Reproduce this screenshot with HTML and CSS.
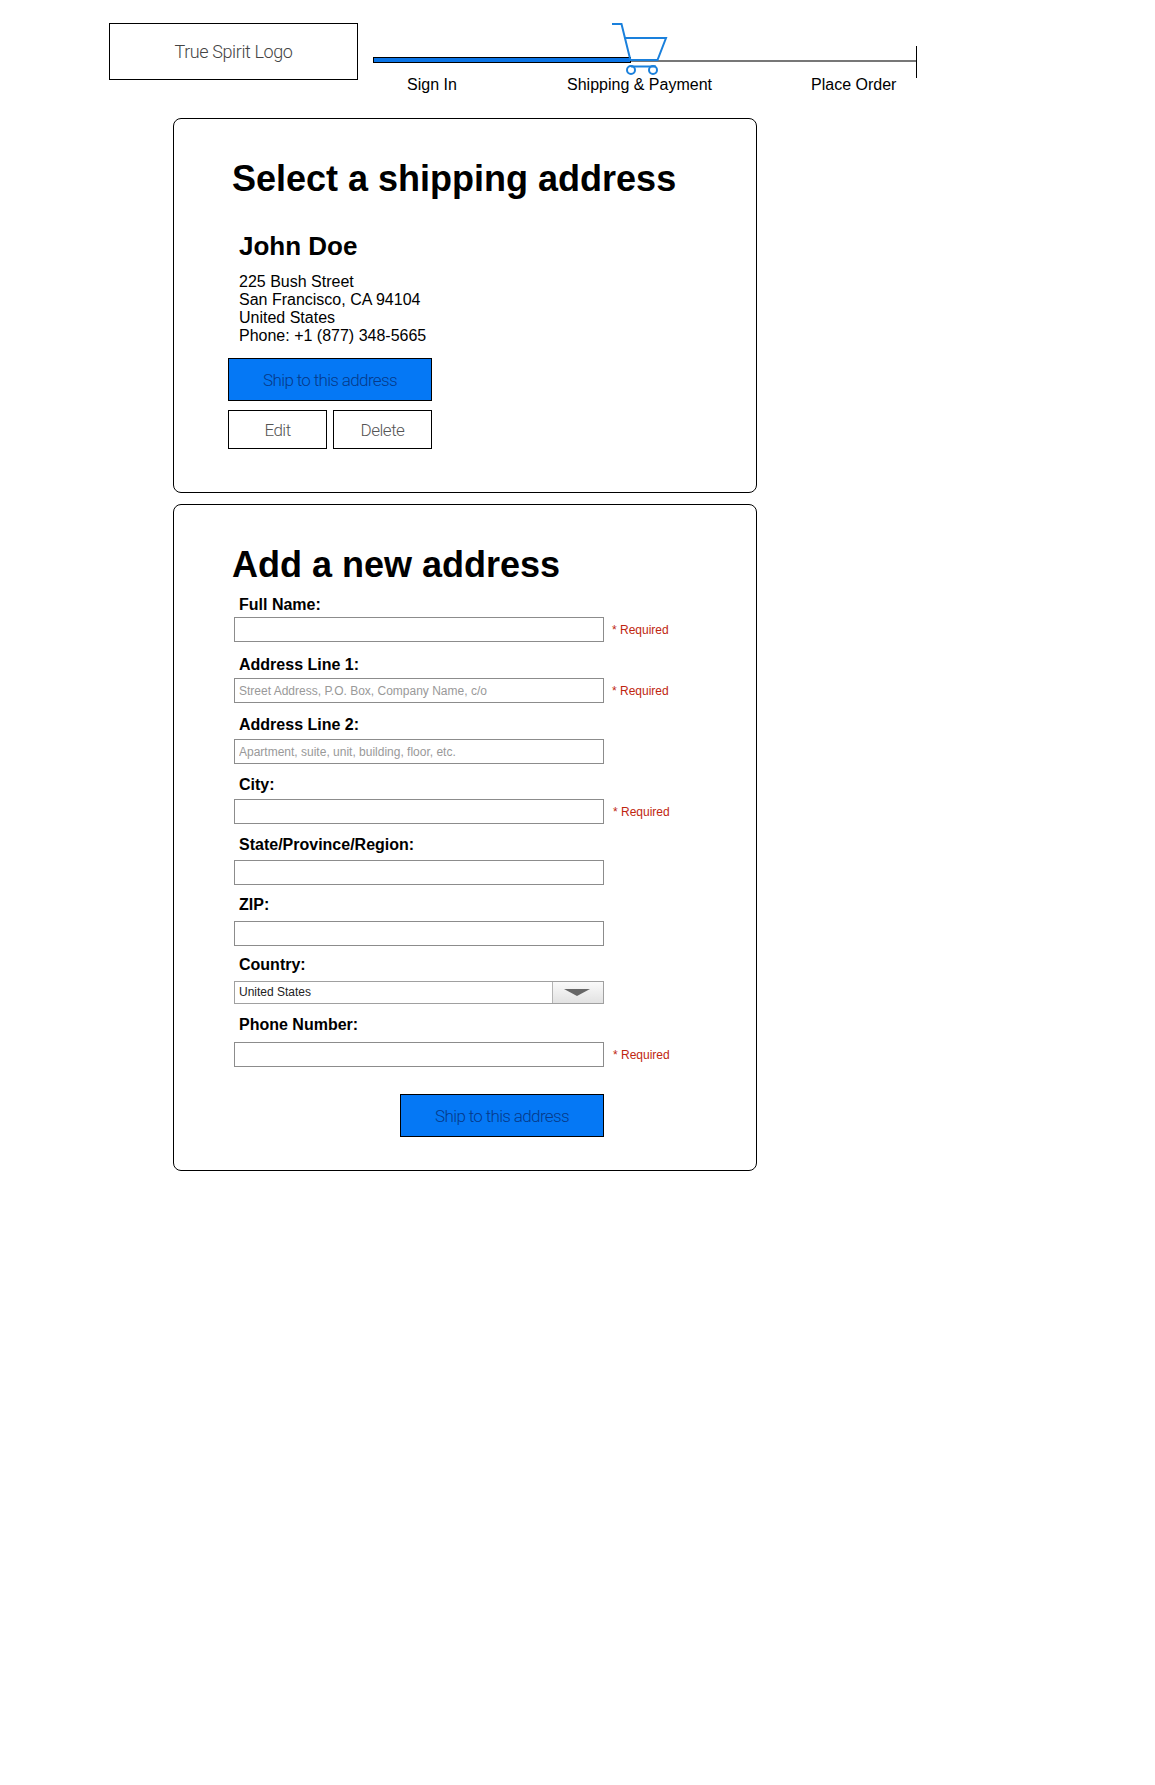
FILE: index.html
```html
<!DOCTYPE html>
<html lang="en">
<head>
    <meta charset="UTF-8">
    <meta name="viewport" content="width=device-width, initial-scale=1.0">
    <title>True Spirit - Shipping</title>
    <link rel="stylesheet" href="styles.css">
</head>
<body>
    <header class="header">
        <div class="logo">True Spirit Logo</div>
        <div class="progress">
            <div class="track">
                <div class="track-done"></div>
                <div class="track-todo"></div>
            </div>
            <svg class="cart" width="60" height="56" viewBox="0 0 60 56" fill="none" stroke="#1a80dc" stroke-width="2">
                <path d="M1 1H10.500L19.500 37.500"/>
                <path d="M13.500 15H55L46.500 37H19"/>
                <path d="M20 43.500H45"/>
                <circle cx="20" cy="47" r="4"/>
                <circle cx="42" cy="47" r="4"/>
            </svg>
            <div class="steps">
                <span>Sign In</span>
                <span>Shipping &amp; Payment</span>
                <span>Place Order</span>
            </div>
        </div>
    </header>

    <main class="main">
        <section class="card card-select">
            <h1 class="card-title">Select a shipping address</h1>
            <h2 class="address-name">John Doe</h2>
            <p class="address-lines">
                225 Bush Street<br>
                San Francisco, CA 94104<br>
                United States<br>
                Phone: +1 (877) 348-5665
            </p>
            <div class="address-actions">
                <button class="btn-primary btn-wide">Ship to this address</button>
                <button class="btn-outline">Edit</button>
                <button class="btn-outline">Delete</button>
            </div>
        </section>

        <section class="card card-form">
            <h1 class="card-title">Add a new address</h1>
            <form class="address-form">
                <div class="fields">
                    <div class="field">
                        <label class="field-label">Full Name:</label>
                        <div class="field-row">
                            <input type="text" class="field-input">
                            <span class="required">* Required</span>
                        </div>
                    </div>
                    <div class="field">
                        <label class="field-label">Address Line 1:</label>
                        <div class="field-row">
                            <input type="text" class="field-input" placeholder="Street Address, P.O. Box, Company Name, c/o">
                            <span class="required">* Required</span>
                        </div>
                    </div>
                    <div class="field">
                        <label class="field-label">Address Line 2:</label>
                        <div class="field-row">
                            <input type="text" class="field-input" placeholder="Apartment, suite, unit, building, floor, etc.">
                        </div>
                    </div>
                    <div class="field">
                        <label class="field-label">City:</label>
                        <div class="field-row">
                            <input type="text" class="field-input">
                            <span class="required required-far">* Required</span>
                        </div>
                    </div>
                    <div class="field">
                        <label class="field-label">State/Province/Region:</label>
                        <div class="field-row">
                            <input type="text" class="field-input">
                        </div>
                    </div>
                    <div class="field">
                        <label class="field-label">ZIP:</label>
                        <div class="field-row">
                            <input type="text" class="field-input">
                        </div>
                    </div>
                    <div class="field">
                        <label class="field-label">Country:</label>
                        <div class="select-box">
                            <span class="select-value">United States</span>
                            <span class="select-arrow"></span>
                        </div>
                    </div>
                    <div class="field">
                        <label class="field-label">Phone Number:</label>
                        <div class="field-row">
                            <input type="text" class="field-input">
                            <span class="required required-far">* Required</span>
                        </div>
                    </div>
                </div>
                <div class="form-submit">
                    <button type="button" class="btn-primary">Ship to this address</button>
                </div>
            </form>
        </section>
    </main>
</body>
</html>
```

FILE: styles.css
```css
* {
    margin: 0;
    padding: 0;
    box-sizing: border-box;
}

body {
    font-family: "Liberation Sans", Arial, sans-serif;
    background-color: white;
    color: #000;
    min-height: 1785px;
}

.header {
    display: flex;
    padding: 23px 0 0 109px;
    height: 118px;
}

.logo {
    width: 249px;
    height: 57px;
    border: 1px solid #000;
    display: flex;
    align-items: center;
    justify-content: center;
    font-family: Roboto, sans-serif;
    font-weight: 300;
    font-size: 18px;
    letter-spacing: -0.4px;
    color: #444;
}

.progress {
    position: relative;
    width: 544px;
    margin-left: 15px;
}

.track {
    display: flex;
    height: 32px;
    margin-top: 23px;
    border-right: 1px solid #000;
}

.track-done {
    width: 258px;
    height: 6px;
    margin-top: 11px;
    background-color: #0a74e6;
    border: 1px solid #000;
}

.track-todo {
    flex-grow: 1;
    height: 2px;
    margin-top: 14px;
    background-color: #777;
}

.cart {
    position: absolute;
    left: 238px;
    top: 0;
}

.steps {
    display: grid;
    grid-template-columns: 160px 244px auto;
    padding-left: 34px;
    margin-top: -2px;
    font-size: 16px;
    line-height: 18px;
}

.main {
    display: flex;
    flex-direction: column;
    gap: 11px;
    width: 584px;
    margin-left: 173px;
}

.card {
    border: 1px solid #000;
    border-radius: 8px;
    padding: 38px 0 0 54px;
}

.card-select {
    height: 375px;
}

.card-form {
    height: 667px;
}

.card-title {
    font-size: 36px;
    line-height: 44px;
    font-weight: bold;
    padding-left: 4px;
}

.address-name {
    font-size: 26px;
    line-height: 30px;
    font-weight: bold;
    margin: 30px 0 0 11px;
}

.address-lines {
    font-size: 16px;
    line-height: 18px;
    margin: 12px 0 0 11px;
}

.address-actions {
    display: grid;
    grid-template-columns: 99px 99px;
    gap: 9px 6px;
    width: 204px;
    margin-top: 13px;
}

.btn-primary {
    width: 204px;
    height: 43px;
    background-color: #0578f5;
    border: 1px solid #000;
    color: #063a8a;
    font-family: Roboto, sans-serif;
    font-weight: 300;
    font-size: 17px;
    letter-spacing: -0.65px;
}

.btn-wide {
    grid-column: 1 / 3;
}

.btn-outline {
    height: 39px;
    background: white;
    border: 1px solid #000;
    color: #555;
    font-family: Roboto, sans-serif;
    font-weight: 300;
    font-size: 17px;
    letter-spacing: -0.5px;
}

.address-form {
    width: 480px;
    margin: 8px 0 0 6px;
}

.field {
    height: 60px;
    padding-top: 1px;
}

.field-label {
    display: block;
    font-size: 16px;
    line-height: 18px;
    font-weight: bold;
    padding-left: 5px;
    margin-bottom: 3px;
}

/* the inputs drift down a little against the labels, row by row */
.field:nth-child(n+2) .field-label { margin-bottom: 4px; }
.field:nth-child(n+3) .field-label { margin-bottom: 5px; }
.field:nth-child(n+5) .field-label { margin-bottom: 6px; }
.field:nth-child(n+6) .field-label { margin-bottom: 7px; }
.field:nth-child(n+8) .field-label { margin-bottom: 8px; }

.field-row {
    display: flex;
    align-items: center;
    height: 25px;
}

.field-input {
    width: 370px;
    height: 25px;
    border: 1px solid #8c8c8c;
    padding: 0 4px;
    font-family: "Liberation Sans", Arial, sans-serif;
    font-size: 12px;
    background: white;
}

.field-input::placeholder {
    color: #999;
}

.required {
    margin-left: 8px;
    font-size: 12px;
    color: #c0260f;
}

.required-far {
    margin-left: 9px;
}

.select-box {
    display: flex;
    width: 370px;
    height: 23px;
    border: 1px solid #a0a0a0;
    font-size: 12px;
    color: #222;
}

.select-value {
    flex-grow: 1;
    padding-left: 4px;
    line-height: 21px;
}

.select-arrow {
    position: relative;
    width: 51px;
    border-left: 1px solid #b4b4b4;
    background: linear-gradient(#fafafa, #e2e2e2);
}

.select-arrow::after {
    content: "";
    position: absolute;
    left: 11px;
    top: 7px;
    border-top: 7px solid #666;
    border-left: 13px solid transparent;
    border-right: 13px solid transparent;
}

.form-submit {
    display: flex;
    justify-content: flex-end;
    width: 370px;
    margin-top: 19px;
}
```
